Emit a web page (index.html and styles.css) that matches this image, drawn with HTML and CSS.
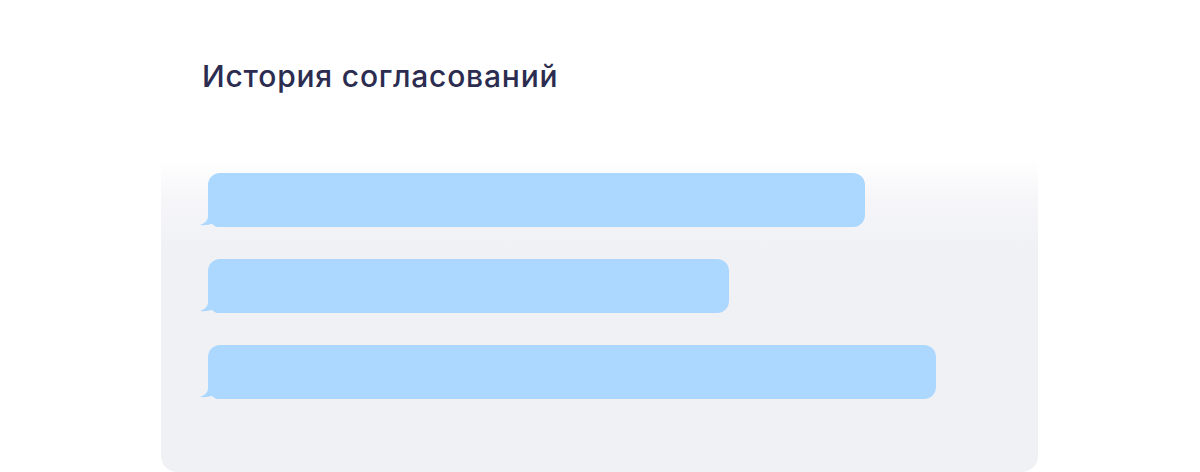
FILE: index.html
```html
<!DOCTYPE html>
<html lang="ru">
<head>
    <meta charset="UTF-8">
    <title>История согласований</title>
    <link rel="stylesheet" href="styles.css">
</head>
<body>
    <section class="history">
        <h1 class="history-title">История согласований</h1>

        <div class="history-panel">
            <div class="bubble" style="width: 657px;">
                <svg class="bubble-tail" width="20" height="20" viewBox="0 0 20 20"><path d="M8 0 L8 9 C8 13 5 16.5 0 18 C4 18.6 9 18 12.5 16.5 C14 19 16 20 20 20 L20 0 Z"/></svg>
            </div>
            <div class="bubble" style="width: 521px;">
                <svg class="bubble-tail" width="20" height="20" viewBox="0 0 20 20"><path d="M8 0 L8 9 C8 13 5 16.5 0 18 C4 18.6 9 18 12.5 16.5 C14 19 16 20 20 20 L20 0 Z"/></svg>
            </div>
            <div class="bubble" style="width: 728px;">
                <svg class="bubble-tail" width="20" height="20" viewBox="0 0 20 20"><path d="M8 0 L8 9 C8 13 5 16.5 0 18 C4 18.6 9 18 12.5 16.5 C14 19 16 20 20 20 L20 0 Z"/></svg>
            </div>
        </div>
    </section>
</body>
</html>
```

FILE: styles.css
```css
body {
    margin: 0;
    background: #fff;
    font-family: Inter, 'Noto Sans', sans-serif;
    overflow: hidden;
}

.history {
    width: 877px;
    margin-left: 161px;
}

.history-title {
    margin: 0;
    padding: 58px 0 0 41px;
    height: 160px;
    box-sizing: border-box;
    font-size: 30px;
    font-weight: 500;
    line-height: 36px;
    color: #2b2c50;
    letter-spacing: 0.8px;
}

.history-panel {
    display: flex;
    flex-direction: column;
    gap: 32px;
    height: 312px;
    padding: 13px 0 0 47px;
    box-sizing: border-box;
    border-radius: 0 0 16px 16px;
    background: linear-gradient(to bottom, #fff 0, #f6f6f9 40px, #f0f1f5 90px, #f0f1f5 100%);
}

.bubble {
    position: relative;
    height: 54px;
    background: #acd7fe;
    border-radius: 12px;
}

.bubble-tail {
    position: absolute;
    left: -8px;
    bottom: 0;
    fill: #acd7fe;
}
```
